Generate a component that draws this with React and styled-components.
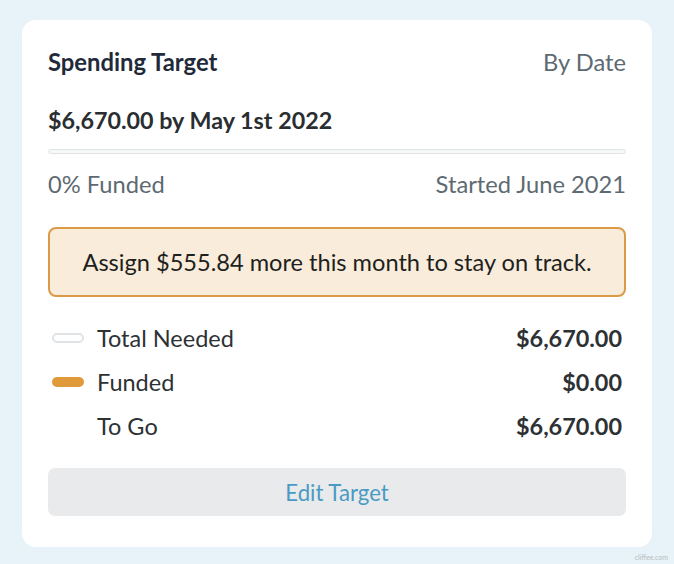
import React from "react";
import styled, { createGlobalStyle } from "styled-components";

const Global = createGlobalStyle`
  html, body { margin: 0; padding: 0; background: #e8f3f9; }
  body { font-family: Lato, "Open Sans", sans-serif; }
`;

const Page = styled.div`
  width: 674px;
  height: 564px;
  box-sizing: border-box;
  padding: 20px 22px 0 22px;
  position: relative;
`;

const Card = styled.div`
  background: #ffffff;
  border-radius: 14px;
  height: 527px;
  box-sizing: border-box;
  padding: 29px 26px 0 26px;
  display: flex;
  flex-direction: column;
`;

const Row = styled.div`
  display: flex;
  justify-content: space-between;
  align-items: center;
  height: 26px;
`;

const Title = styled.div`
  font-size: 23.8px;
  font-weight: 700;
  color: #1f2a3a;
  line-height: 26px;
`;

const Muted = styled.div`
  font-size: 23.7px;
  color: #5e6a72;
  line-height: 26px;
`;

const Goal = styled.div`
  font-size: 23.3px;
  font-weight: 700;
  color: #2a2e31;
  line-height: 26px;
  margin-top: 32px;
`;

const Track = styled.div`
  margin-top: 16px;
  height: 5px;
  border-radius: 3px;
  background: #f7f8f8;
  border: 1px solid #e1e4e6;
  box-sizing: border-box;
`;

const StatusRow = styled(Row)`
  margin-top: 17px;
`;

const Alert = styled.div`
  margin-top: 30px;
  height: 70px;
  box-sizing: border-box;
  border: 2px solid #db9a45;
  background: #f9ecda;
  border-radius: 8px;
  display: flex;
  align-items: center;
  justify-content: center;
  font-size: 23.6px;
  color: #1e1f20;
`;

const Legend = styled.div`
  margin-top: 28px;
  display: flex;
  flex-direction: column;
  gap: 18px;
`;

const LegendRow = styled.div`
  display: flex;
  align-items: center;
  height: 26px;
`;

const Swatch = styled.span`
  width: 32px;
  height: 10px;
  margin-left: 4px;
  margin-right: 13px;
  border-radius: 5px;
  box-sizing: border-box;
  background: ${(p) => (p.$kind === "funded" ? "#e19a3a" : p.$kind === "needed" ? "#ffffff" : "transparent")};
  border: ${(p) => (p.$kind === "needed" ? "2px solid #e1e4e6" : "none")};
`;

const Label = styled.span`
  font-size: 23.5px;
  color: #2d3134;
  flex: 1;
`;

const Amount = styled.span`
  font-size: 23.4px;
  font-weight: 700;
  color: #2d3134;
  margin-right: 4px;
`;

const Button = styled.button`
  margin-top: 29px;
  height: 48px;
  border: none;
  border-radius: 7px;
  background: #e8eaeb;
  color: #4a9bc4;
  font-family: Lato, "Open Sans", sans-serif;
  font-size: 22.2px;
  cursor: pointer;
`;

const Watermark = styled.div`
  position: absolute;
  right: 6px;
  bottom: 3px;
  font-size: 7px;
  color: #b5bcc0;
  font-family: Lato, sans-serif;
`;

export default function App() {
  const rows = [
    { kind: "needed", label: "Total Needed", amount: "$6,670.00" },
    { kind: "funded", label: "Funded", amount: "$0.00" },
    { kind: "none", label: "To Go", amount: "$6,670.00" },
  ];
  return (
    <Page>
      <Global />
      <Card>
        <Row>
          <Title>Spending Target</Title>
          <Muted>By Date</Muted>
        </Row>
        <Goal>$6,670.00 by May 1st 2022</Goal>
        <Track />
        <StatusRow>
          <Muted>0% Funded</Muted>
          <Muted>Started June 2021</Muted>
        </StatusRow>
        <Alert>Assign $555.84 more this month to stay on track.</Alert>
        <Legend>
          {rows.map((r) => (
            <LegendRow key={r.label}>
              <Swatch $kind={r.kind} />
              <Label>{r.label}</Label>
              <Amount>{r.amount}</Amount>
            </LegendRow>
          ))}
        </Legend>
        <Button>Edit Target</Button>
      </Card>
      <Watermark>cliffee.com</Watermark>
    </Page>
  );
}
